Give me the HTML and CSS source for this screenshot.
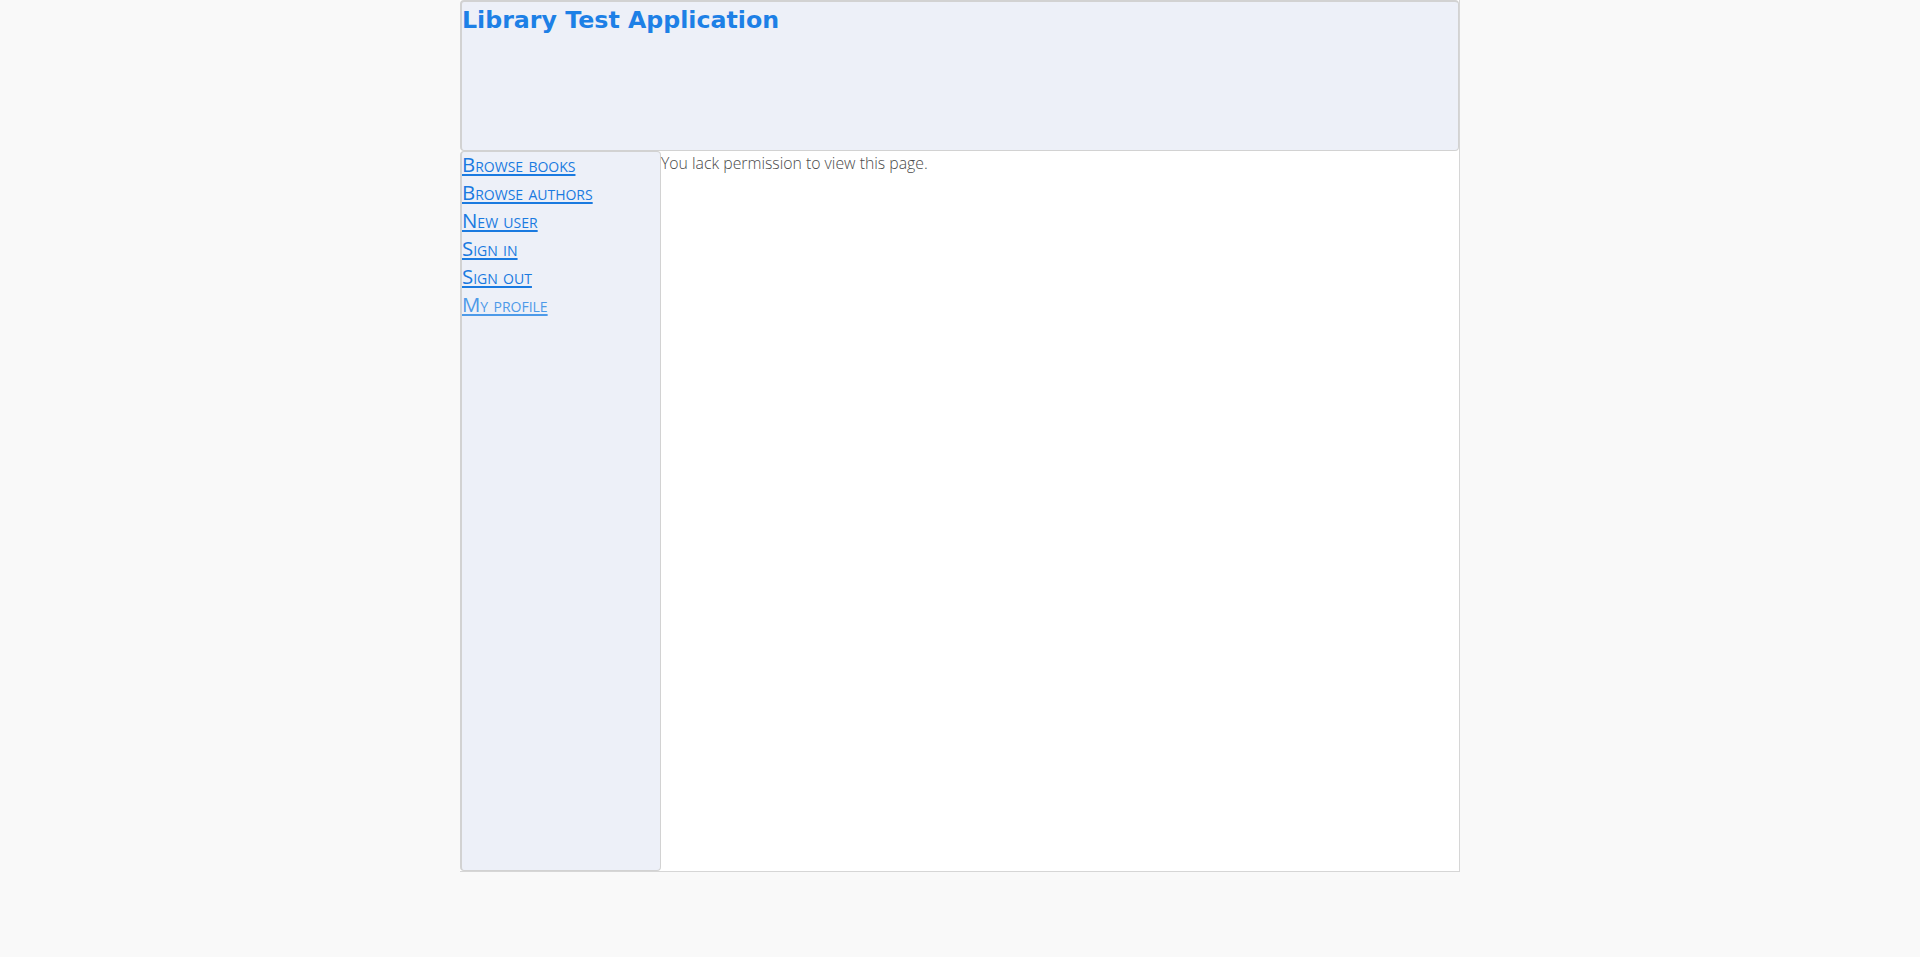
FILE: index.html
```html
<!DOCTYPE html>
<html lang="en">
<head>
<meta charset="utf-8">
<title>Library Test Application</title>
<link rel="stylesheet" href="styles.css">
</head>
<body>
<div class="page">
  <header class="header">
    <h1 class="title">Library Test Application</h1>
  </header>
  <div class="main">
    <nav class="sidebar">
      <a class="nav-link" href="#">Browse books</a>
      <a class="nav-link" href="#">Browse authors</a>
      <a class="nav-link" href="#">New user</a>
      <a class="nav-link" href="#">Sign in</a>
      <a class="nav-link" href="#">Sign out</a>
      <a class="nav-link nav-link-visited" href="#">My profile</a>
    </nav>
    <section class="content">
      <p class="message">You lack permission to view this page.</p>
    </section>
  </div>
</div>
</body>
</html>
```
FILE: styles.css
```css
html, body {
  margin: 0;
  padding: 0;
  background: #f9f9f9;
}

.page {
  width: 1000px;
  margin: 0 auto;
  background: #ffffff;
  border-right: 1px solid #d6d6d6;
  border-bottom: 1px solid #d6d6d6;
  box-sizing: border-box;
  display: flex;
  flex-direction: column;
  height: 872px;
}

.header {
  height: 151px;
  box-sizing: border-box;
  background: #edf0f8;
  border: 1px solid #d2d2d2;
  border-left-width: 2px;
  border-top-width: 2px;
  border-radius: 4px;
  flex: none;
}

.title {
  margin: 0;
  padding: 4px 0 0 0;
  font-family: "DejaVu Sans", sans-serif;
  font-weight: bold;
  font-size: 23.7px;
  line-height: 28px;
  color: #1d80e6;
}

.main {
  flex: 1;
  display: flex;
}

.sidebar {
  width: 201px;
  box-sizing: border-box;
  background: #edf0f8;
  border: 1px solid #d2d2d2;
  border-left-width: 2px;
  border-radius: 4px;
  display: flex;
  flex-direction: column;
  padding: 0;
}

.nav-link {
  font-family: "Open Sans", sans-serif;
  font-variant: small-caps;
  font-weight: 500;
  font-size: 20.4px;
  line-height: 24px;
  margin-bottom: 4px;
  color: #1a7ae0;
  text-decoration: underline;
}

.nav-link-visited {
  color: #4d9ae8;
}

.content {
  flex: 1;
}

.message {
  margin: 0;
  font-family: "Open Sans", sans-serif;
  font-weight: 300;
  font-size: 15.8px;
  line-height: 24px;
  color: #4a4a4a;
}
```
